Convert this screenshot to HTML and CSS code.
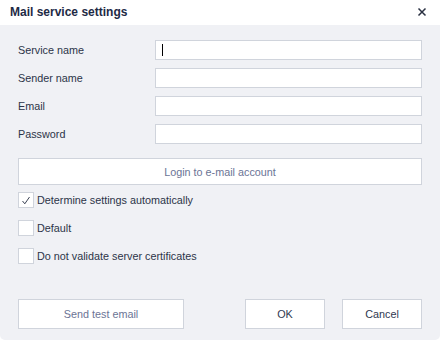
FILE: index.html
```html
<!DOCTYPE html>
<html>
<head>
<meta charset="utf-8">
<link rel="stylesheet" href="styles.css">
</head>
<body>
<div class="dialog">
  <div class="titlebar">
    <span class="title">Mail service settings</span>
    <svg class="close" width="10" height="10" viewBox="0 0 10 10"><path d="M1.5 1.5L8.5 8.5M8.5 1.5L1.5 8.5" stroke="#2a3142" stroke-width="1.5"/></svg>
  </div>
  <div class="content">
    <div class="form">
      <label class="lbl">Service name</label>
      <div class="input focused"><span class="caret"></span></div>
      <label class="lbl">Sender name</label>
      <div class="input"></div>
      <label class="lbl">Email</label>
      <div class="input"></div>
      <label class="lbl">Password</label>
      <div class="input"></div>
    </div>
    <div class="btn login">Login to e-mail account</div>
    <div class="checks">
      <div class="check"><span class="box"><svg width="10" height="9" viewBox="0 0 10 9"><path d="M1.5 5L3.8 7.8L8.5 1" fill="none" stroke="#3b4254" stroke-width="1"/></svg></span><span>Determine settings automatically</span></div>
      <div class="check"><span class="box"></span><span>Default</span></div>
      <div class="check"><span class="box"></span><span>Do not validate server certificates</span></div>
    </div>
    <div class="footer">
      <div class="btn test">Send test email</div>
      <div class="spacer"></div>
      <div class="btn action">OK</div>
      <div class="btn action">Cancel</div>
    </div>
  </div>
</div>
</body>
</html>
```
FILE: styles.css
```css
html, body {
  margin: 0;
  padding: 0;
  background: #ffffff;
}
body {
  width: 440px;
  height: 340px;
  font-family: "Liberation Sans", Arial, sans-serif;
  font-size: 10.8px;
  color: #2c3448;
}
.dialog {
  width: 440px;
  height: 340px;
  display: flex;
  flex-direction: column;
  background: #f0f1f5;
  border-radius: 0 0 5px 5px;
  overflow: hidden;
}
.titlebar {
  height: 25px;
  flex: none;
  background: #ffffff;
  display: flex;
  align-items: center;
  justify-content: space-between;
  padding: 0 13px 0 10px;
}
.title {
  font-weight: bold;
  font-size: 12px;
  color: #1e2a45;
  margin-top: -1px;
}
.close {
  margin-top: -1px;
}
.content {
  padding: 15px 18px 0 18px;
  display: flex;
  flex-direction: column;
}
.form {
  display: grid;
  grid-template-columns: 137px 1fr;
  grid-auto-rows: 20px;
  row-gap: 8px;
  align-items: center;
}
.lbl {
  color: #2c3448;
}
.input {
  height: 20px;
  box-sizing: border-box;
  background: #ffffff;
  border: 1px solid #d0d4dc;
  display: flex;
  align-items: center;
  padding-left: 6px;
}
.caret {
  width: 1px;
  height: 12px;
  background: #000000;
}
.btn {
  box-sizing: border-box;
  background: #ffffff;
  border: 1px solid #d0d4dc;
  display: flex;
  align-items: center;
  justify-content: center;
}
.login {
  margin-top: 14px;
  height: 27px;
  color: #6b7495;
}
.checks {
  margin-top: 7px;
  display: flex;
  flex-direction: column;
  gap: 12px;
}
.check {
  display: flex;
  align-items: center;
  height: 16px;
  gap: 3px;
}
.box {
  width: 16px;
  height: 16px;
  box-sizing: border-box;
  background: #ffffff;
  border: 1px solid #d0d4dc;
  display: flex;
  align-items: center;
  justify-content: center;
}
.footer {
  margin-top: 35px;
  display: flex;
  height: 30px;
  gap: 17px;
}
.footer .btn {
  height: 30px;
}
.test {
  width: 166px;
  color: #6b7495;
}
.spacer {
  flex: 1;
  margin-left: -17px;
}
.action {
  width: 80px;
  color: #2f3850;
}
```
